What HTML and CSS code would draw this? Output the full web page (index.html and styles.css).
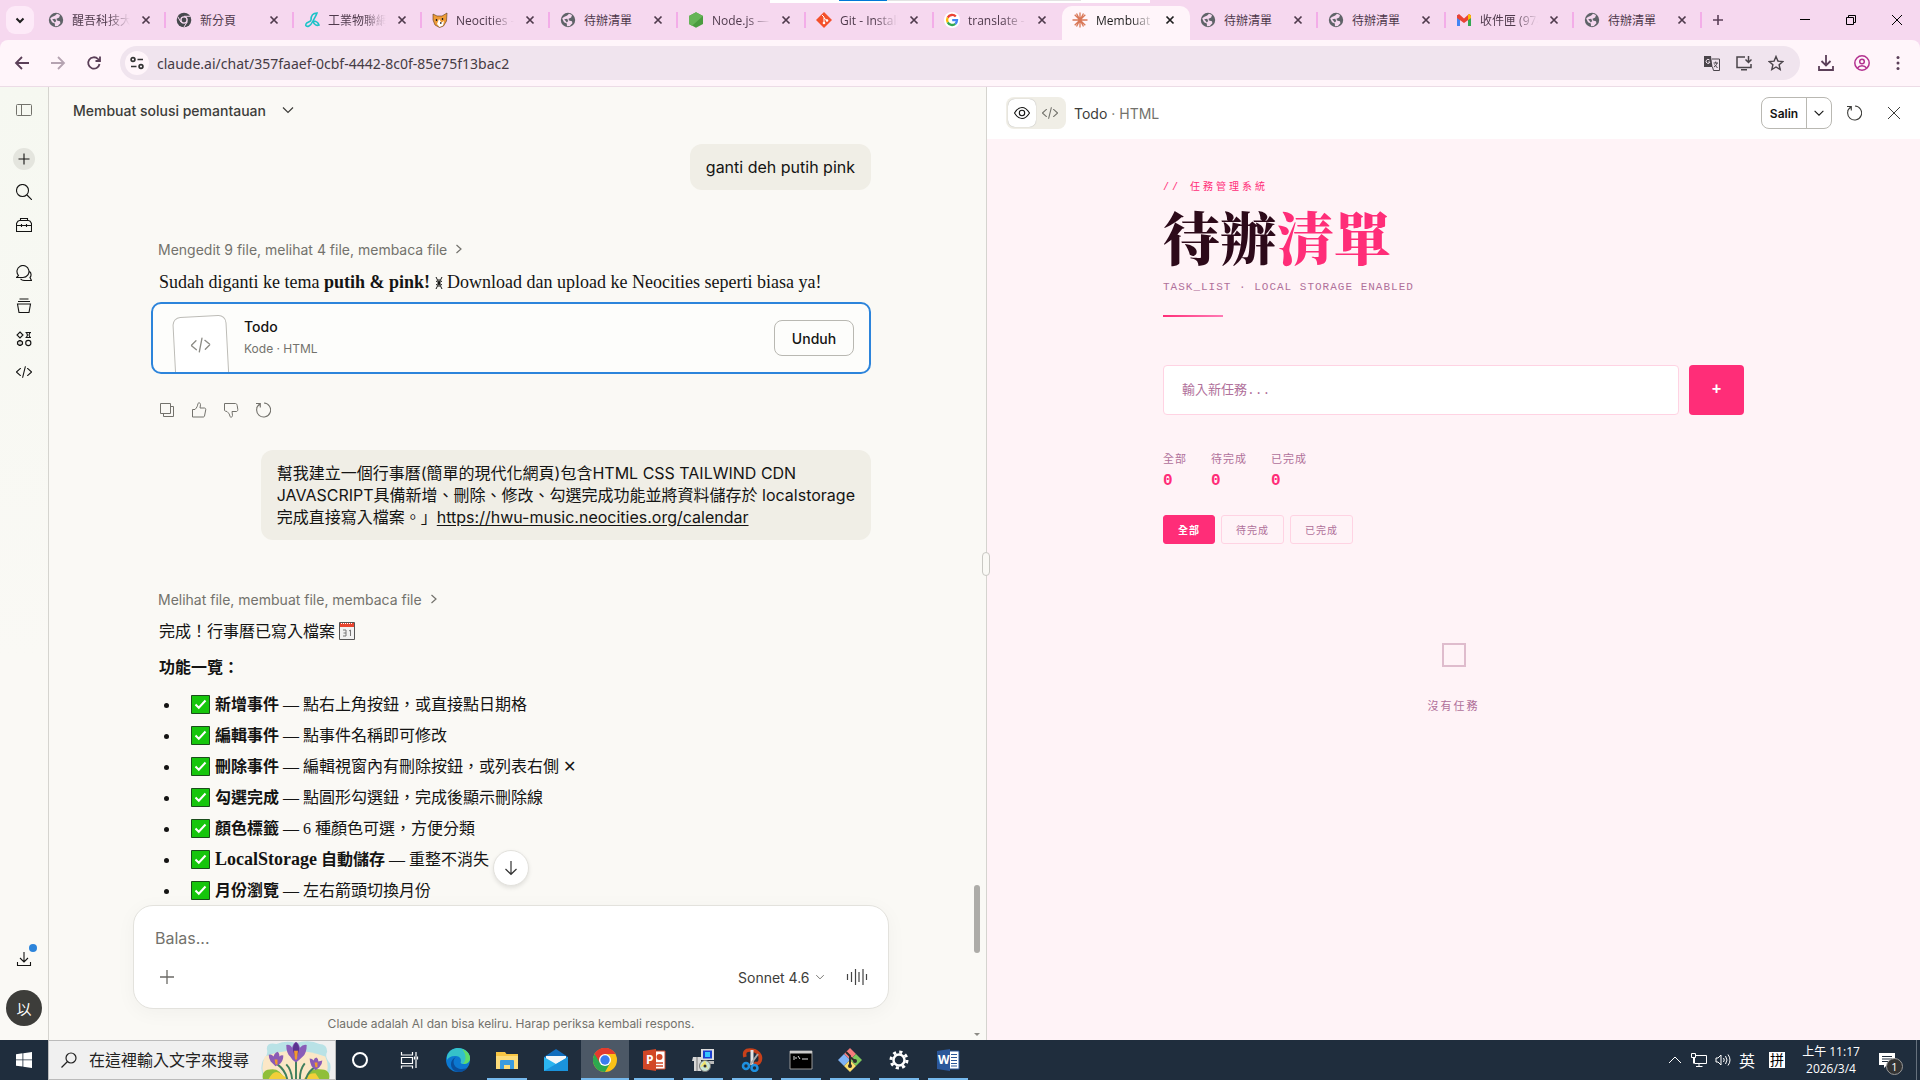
FILE: index.html
```html
<!DOCTYPE html>
<html lang="zh-Hant">
<head>
  <meta charset="UTF-8">
  <meta name="viewport" content="width=device-width, initial-scale=1.0">
  <title>Membuat solusi pemantauan</title>
  <link rel="stylesheet" href="styles.css">
</head>
<body>

  <!-- shared icons -->
  <svg class="sprite" aria-hidden="true">
    <symbol id="i-globe" viewBox="0 0 16 16"><circle cx="8" cy="8" r="7.2" fill="#5f6368"/><path d="M2.2 6.5C4 4 6 4.600 7.500 3.200L9 1.700 12 3l-.8 2.600L8.500 6.800 9 8.600l3 .6.4 2L9.800 14 7 14.300 6.800 11.600 4 10.200z" fill="#f6d8ef"/><path d="M4.200 7.200l3-.4 1 2.200-1.400 1.400z" fill="#5f6368"/></symbol>
    <symbol id="i-x" viewBox="0 0 16 16"><path d="M4.500 4.500l7 7m0-7l-7 7" fill="none" stroke="currentColor" stroke-width="1.700"/></symbol>
    <symbol id="i-code" viewBox="1 1 18 18"><path d="M6 6l-4.500 4L6 14M14 6l4.500 4L14 14M11.500 4l-3 12" fill="none" stroke="currentColor" stroke-width="1.200" stroke-linecap="round" stroke-linejoin="round"/></symbol>
    <symbol id="i-down" viewBox="0 0 16 16"><path d="M3 5.500l5 5 5-5" fill="none" stroke="currentColor" stroke-width="1.200"/></symbol>
    <symbol id="i-right" viewBox="0 0 16 16"><path d="M5.500 4l4.500 4-4.500 4" fill="none" stroke="currentColor" stroke-width="1.200"/></symbol>
    <symbol id="i-plus" viewBox="0 0 16 16"><path d="M8 1v14M1 8h14" fill="none" stroke="currentColor" stroke-width="1.300"/></symbol>
    <symbol id="i-reload" viewBox="0 0 16 16"><path d="M1 1.500h4.300v4M5 2A7 7 0 1 0 9 1M4.800 2.200A7 7 0 0 0 1.600 6" fill="none" stroke="currentColor" stroke-width="1.100"/></symbol>
    <symbol id="i-check" viewBox="0 0 19 19"><path d="M.5.5h18v18H.5z" fill="#16c60c" stroke="#1b4d1b"/><path d="M4.500 9.500l3.300 3.300L14.500 5.500" fill="none" stroke="#fff" stroke-width="2"/></symbol>
  </svg>

  <header class="browser">
    <div class="tabstrip">
      <span class="load-bar"><i></i></span>
      <button class="tab-search" aria-label="Search tabs"><svg viewBox="0 0 16 16"><path d="M4.500 6.500L8 10l3.500-3.500" fill="none" stroke="#1f1f1f" stroke-width="2"/></svg></button>
      <div class="tab"><svg><use href="#i-globe"/></svg><span class="fade">醒吾科技大學</span><button aria-label="Close"><svg><use href="#i-x"/></svg></button></div>
      <div class="tab"><svg viewBox="0 0 16 16"><circle cx="8" cy="8" r="7.300" fill="#46494d"/><circle cx="8" cy="8" r="3.800" fill="#f6d8ef"/><circle cx="8" cy="8" r="2.400" fill="#46494d"/><path d="M8 4.300h6.500M4.800 10L1.700 4.500M11.200 10L8 15" stroke="#f6d8ef" stroke-width="1"/></svg><span>新分頁</span><button aria-label="Close"><svg><use href="#i-x"/></svg></button></div>
      <div class="tab"><svg viewBox="0 0 16 16" fill="none" stroke="#1cc3c8" stroke-width="1.600"><path d="M13 1C8 1 7 5 7 8c0 2-4 2-5 4s1 3 3 2 3-3 4-5 3-5 4-8zM9 9c2 0 5 1 6 4-2 1-5 0-6-4"/></svg><span class="fade">工業物聯網概</span><button aria-label="Close"><svg><use href="#i-x"/></svg></button></div>
      <div class="tab"><svg viewBox="0 0 16 16"><path d="M1 2l4 2h5l5-3-.5 8-3 5-4 1.500L3 13 1 8z" fill="#ee9b37" stroke="#5a3a1a" stroke-width=".6"/><path d="M7 7l2.500 3.500L12 9l-1 4.500-3.500 1.500L5 12z" fill="#fff"/><path d="M4.500 7v2M10.500 6v2M8 11h1.500" stroke="#222" stroke-width="1.300"/></svg><span class="fade">Neocities - C</span><button aria-label="Close"><svg><use href="#i-x"/></svg></button></div>
      <div class="tab"><svg><use href="#i-globe"/></svg><span>待辦清單</span><button aria-label="Close"><svg><use href="#i-x"/></svg></button></div>
      <div class="tab"><svg viewBox="0 0 16 16"><path d="M8 .3l7 3.800v7.800L8 15.700l-7-3.800V4.100z" fill="#4a9c3f"/><path d="M8 .3l7 3.800L4 13.700l-3-1.800V4.100z" fill="#66b457"/></svg><span class="fade">Node.js — D</span><button aria-label="Close"><svg><use href="#i-x"/></svg></button></div>
      <div class="tab"><svg viewBox="0 0 16 16"><path d="M8 0l8 8-8 8-8-8z" fill="#f4502a"/><path d="M6 3l2 2v6M8 6l3 2.500" stroke="#fff" fill="none"/><circle cx="8" cy="11" r="1.300" fill="#fff"/><circle cx="11" cy="8.500" r="1.300" fill="#fff"/></svg><span class="fade">Git - Install</span><button aria-label="Close"><svg><use href="#i-x"/></svg></button></div>
      <div class="tab"><svg viewBox="0 0 16 16" fill="none" stroke-width="2.300"><circle cx="8" cy="8" r="8" fill="#fff"/><path d="M11.800 4.600A5 5 0 0 0 3.700 5.600" stroke="#ea4335"/><path d="M3.700 5.600a5 5 0 0 0 0 4.800" stroke="#fbbc05"/><path d="M3.700 10.400a5 5 0 0 0 7.600 1.400" stroke="#34a853"/><path d="M11.300 11.800A5 5 0 0 0 13 8.200H8.200" stroke="#4285f4"/></svg><span class="fade">translate - G</span><button aria-label="Close"><svg><use href="#i-x"/></svg></button></div>
      <div class="tab active"><svg viewBox="0 0 16 16" stroke="#d97757" stroke-width="1.300"><path d="M8 .5v15M.5 8h15M2.700 2.700l10.600 10.600M13.300 2.700L2.700 13.300M4.500 1.500l7 13M11.500 1.500l-7 13"/></svg><span class="fade">Membuat so</span><button aria-label="Close"><svg><use href="#i-x"/></svg></button></div>
      <div class="tab"><svg><use href="#i-globe"/></svg><span>待辦清單</span><button aria-label="Close"><svg><use href="#i-x"/></svg></button></div>
      <div class="tab"><svg><use href="#i-globe"/></svg><span>待辦清單</span><button aria-label="Close"><svg><use href="#i-x"/></svg></button></div>
      <div class="tab"><svg viewBox="0 0 16 16"><path d="M1 3h3v11H1z" fill="#4285f4"/><path d="M12 3h3v11h-3z" fill="#34a853"/><path d="M1 3.500L3 2l5 4.500L13 2l2 1.500V6l-7 5-7-5z" fill="#ea4335"/><path d="M12 3l1.500-1L15 3.500V6l-3 2z" fill="#fbbc05"/></svg><span class="fade">收件匣 (974)</span><button aria-label="Close"><svg><use href="#i-x"/></svg></button></div>
      <div class="tab"><svg><use href="#i-globe"/></svg><span>待辦清單</span><button aria-label="Close"><svg><use href="#i-x"/></svg></button></div>
      <button class="new-tab" aria-label="New tab"><svg viewBox="0 0 16 16"><path d="M8 3v10M3 8h10" stroke="#5b3f58" stroke-width="1.600"/></svg></button>
      <div class="window-buttons">
        <button aria-label="Minimize"><svg viewBox="0 0 12 12"><path d="M1 5.500h10" stroke="#000"/></svg></button>
        <button aria-label="Restore"><svg viewBox="0 0 12 12" fill="none" stroke="#000"><path d="M1.500 3.500h7v7h-7zM3.500 3.500v-2h7v7h-2"/></svg></button>
        <button aria-label="Close window"><svg viewBox="0 0 12 12"><path d="M1 1l10 10M11 1L1 11" stroke="#000"/></svg></button>
      </div>
    </div>

    <div class="toolbar">
      <button aria-label="Back"><svg viewBox="0 0 16 16" fill="none" stroke="#5b3f58" stroke-width="1.800"><path d="M15 8H2M8 2L2 8l6 6"/></svg></button>
      <button aria-label="Forward"><svg viewBox="0 0 16 16" fill="none" stroke="#b5a3b1" stroke-width="1.800"><path d="M1 8h13M8 2l6 6-6 6"/></svg></button>
      <button aria-label="Reload"><svg viewBox="0 0 16 16" fill="none" stroke="#5b3f58" stroke-width="1.800"><path d="M13.500 9A5.700 5.700 0 1 1 12 4l1.500 1.500M14 1.500v4.500H9.500"/></svg></button>
      <div class="address">
        <span class="site-info"><svg viewBox="0 0 16 16" fill="none" stroke="#333" stroke-width="1.700"><circle cx="4" cy="4.500" r="1.900"/><path d="M8.500 4.500H14M2 11.500h5.500"/><circle cx="12" cy="11.500" r="1.900"/></svg></span>
        <input type="text" aria-label="Address" value="claude.ai/chat/357faaef-0cbf-4442-8c0f-85e75f13bac2">
        <button aria-label="Translate"><svg viewBox="0 0 16 16"><path d="M0 1h7l1.500 11H0z" fill="#4a444a"/><path d="M8 4h7.500v11.500h-6L8.500 12M9.500 8H14M11.700 6.500V8M13 8c-.5 2-1.500 3-3 4M10.500 9.500l3 3.500" fill="none" stroke="#4a444a"/><path d="M5.500 5A2 2 0 1 0 6 7H4.200" fill="none" stroke="#f0e4ee"/></svg></button>
        <button aria-label="Install"><svg viewBox="0 0 16 16" fill="none" stroke="#4a444a" stroke-width="1.500"><path d="M9 2H1v10.500h14V9M5 14.700h6M12.500 1v6M9.500 4.500l3 3 3-3"/></svg></button>
        <button aria-label="Bookmark"><svg viewBox="0 0 16 16" fill="none" stroke="#4a444a" stroke-width="1.400"><path d="M8 1.500l1.900 4.600 4.900.4-3.700 3.200 1.100 4.800L8 12l-4.200 2.500 1.100-4.800L1.200 6.500l4.900-.4z"/></svg></button>
      </div>
      <button aria-label="Downloads"><svg viewBox="0 0 16 16" fill="none" stroke="#5b3f58" stroke-width="1.800"><path d="M8 0v10M3.500 6L8 10.500 12.500 6M1 11v4h14v-4"/></svg></button>
      <button aria-label="Profile"><svg viewBox="0 0 16 16" fill="none" stroke="#b3308f" stroke-width="1.500"><circle cx="8" cy="8" r="7.200"/><circle cx="8" cy="6.500" r="2.300"/><path d="M3.500 13c2-3 7-3 9 0"/></svg></button>
      <button aria-label="Menu"><svg viewBox="0 0 16 16" fill="#5b3f58"><circle cx="8" cy="2.500" r="1.500"/><circle cx="8" cy="8" r="1.500"/><circle cx="8" cy="13.500" r="1.500"/></svg></button>
    </div>
  </header>

  <main class="app">
    <nav class="rail">
      <button class="rail-toggle" aria-label="Sidebar"><svg viewBox="0 0 16 16"><rect x=".5" y="2.500" width="15" height="11" rx="1"/><path d="M5.500 2.500v11"/></svg></button>
      <button class="rail-new" aria-label="New chat"><svg viewBox="0 0 16 16"><path d="M8 2.500v11M2.500 8h11"/></svg></button>
      <button aria-label="Search"><svg viewBox="0 0 16 16"><circle cx="6.500" cy="6.500" r="6"/><path d="M11 11l5 5"/></svg></button>
      <button aria-label="Customize"><svg viewBox="0 0 16 16"><path d="M.5 6.500c1-2.500 2-3 3-3h9c1 0 2 .5 3 3v8H.5zM4.500 3.500v-2h7v2M.5 8.500h15M5.500 7v3M10.500 7v3"/></svg></button>
      <button class="rail-gap" aria-label="Chats"><svg viewBox="0 0 16 16"><path d="M2.500 10.500A6 6 0 1 1 7 12.500H.5zM13.500 6.500c2.500 2 1.500 5 .5 6l1.500 3H9c-2 0-3.500-.7-4.500-1.700"/></svg></button>
      <button aria-label="Projects"><svg viewBox="0 0 16 16"><path d="M3.500 1h9M2 3.500h12M1.500 6h13l-1.500 8.500H3z"/></svg></button>
      <button aria-label="Artifacts"><svg viewBox="0 0 16 16"><path d="M4 1l3 3-3 3-3-3zM9.500 1.500h5.500M9.500 6.500h5.500M10.500 1.500l1 2.500-1 2.500M14 1.500L13 4l1 2.500"/><circle cx="12.300" cy="12" r="2.600"/><path d="M3 9.500h2v1.300h1.500v2.400H5v1.300H3v-1.300H1.500v-2.400H3z"/></svg></button>
      <button aria-label="Code"><svg><use href="#i-code"/></svg></button>
      <button class="rail-download" aria-label="Get apps"><svg viewBox="0 0 16 16"><path d="M8 1v9.500M4 7l4 4 4-4M1.500 11v3.500h13V11"/></svg><i></i></button>
      <button class="avatar">以</button>
    </nav>

    <section class="chat">
      <button class="chat-title">Membuat solusi pemantauan <svg><use href="#i-down"/></svg></button>

      <div class="thread">
        <p class="bubble">ganti deh putih pink</p>

        <button class="steps">Mengedit 9 file, melihat 4 file, membaca file <svg><use href="#i-right"/></svg></button>
        <p class="reply latin">Sudah diganti ke tema <b>putih &amp; pink!</b> <svg class="burst" viewBox="0 0 8 14"><path d="M1 1l6 12M7 1L1 13M1 5l6 4M7 5L1 9M4 3v8" fill="none" stroke="#141413"/></svg> Download dan upload ke Neocities seperti biasa ya!</p>
        <div class="file-card">
          <span class="sheet"><svg><use href="#i-code"/></svg></span>
          <div class="file-name"><strong>Todo</strong><small>Kode · HTML</small></div>
          <button class="btn">Unduh</button>
        </div>
        <div class="actions">
          <button aria-label="Copy"><svg viewBox="0 0 16 16"><path d="M1.500 1.500h10v10h-10zM11.500 4.500h3v10h-10v-3"/></svg></button>
          <button aria-label="Good"><svg viewBox="0 0 16 16"><path d="M1.500 7.500h2.500c2-2 2.500-3.500 3-6 .3-1 2.500-1 2.500 1L9 6h4.500c1 0 1.500 1 1.200 2L13.500 14c-.2.500-.5 1-1 1h-11z"/></svg></button>
          <button aria-label="Bad"><svg viewBox="0 0 16 16"><path d="M1.500 1.500h11c1 0 1.500 1 1.700 2l.6 4c0 1-.5 2-1.300 2H9l.5 4c0 2-2.200 2-2.500 1-.5-2.500-1-3-3-5-1 0-2-.5-2.500-1z"/></svg></button>
          <button aria-label="Retry"><svg><use href="#i-reload"/></svg></button>
        </div>

        <p class="bubble">幫我建立一個行事曆(簡單的現代化網頁)包含HTML CSS TAILWIND CDN<br>JAVASCRIPT具備新增、刪除、修改、勾選完成功能並將資料儲存於 localstorage<br>完成直接寫入檔案。」<a href="#">https://hwu-music.neocities.org/calendar</a></p>

        <button class="steps">Melihat file, membuat file, membaca file <svg><use href="#i-right"/></svg></button>
        <p class="reply">完成！行事曆已寫入檔案 <svg class="emoji" viewBox="0 0 16 18"><path d="M.5.5h15v17H.5z" fill="#f2f2f2" stroke="#555"/><path d="M1 1h14v4H1z" fill="#e8442e"/><path d="M2 1.500h12" stroke="#fff" stroke-dasharray="1 1"/><path d="M4 8h3v6H4M4.500 11H7M10 9l1.500-1v6" fill="none" stroke="#777"/></svg></p>
        <p class="reply heading"><b>功能一覽：</b></p>
        <ul class="features">
          <li><svg><use href="#i-check"/></svg><b>新增事件</b> — 點右上角按鈕，或直接點日期格</li>
          <li><svg><use href="#i-check"/></svg><b>編輯事件</b> — 點事件名稱即可修改</li>
          <li><svg><use href="#i-check"/></svg><b>刪除事件</b> — 編輯視窗內有刪除按鈕，或列表右側 ✕</li>
          <li><svg><use href="#i-check"/></svg><b>勾選完成</b> — 點圓形勾選鈕，完成後顯示刪除線</li>
          <li><svg><use href="#i-check"/></svg><b>顏色標籤</b> — 6 種顏色可選，方便分類</li>
          <li><svg><use href="#i-check"/></svg><b><span class="latin">LocalStorage</span> 自動儲存</b> — 重整不消失</li>
          <li><svg><use href="#i-check"/></svg><b>月份瀏覽</b> — 左右箭頭切換月份</li>
        </ul>
      </div>

      <div class="dock">
        <button class="to-bottom" aria-label="Scroll to bottom"><svg viewBox="0 0 16 16" fill="none" stroke="#333" stroke-width="1.200"><path d="M8 1v13M2.500 9L8 14.300 13.500 9"/></svg></button>
        <form class="composer">
          <textarea rows="1" aria-label="Balas" placeholder="Balas..."></textarea>
          <div class="composer-row">
            <button type="button" aria-label="Attach"><svg><use href="#i-plus"/></svg></button>
            <label class="model"><select aria-label="Model"><option>Sonnet 4.6</option></select><svg><use href="#i-down"/></svg></label>
            <button type="button" class="voice" aria-label="Voice"><svg viewBox="0 0 22 16" stroke="#444" stroke-width="1.200"><path d="M1.500 5v6M5.500 3v10M9.500 0v16M13 3v10M17 0v16M20.500 5v6"/></svg></button>
          </div>
        </form>
        <p class="note">Claude adalah AI dan bisa keliru. Harap periksa kembali respons.</p>
      </div>
      <span class="scroll-thumb"></span>
      <span class="scroll-arrow"></span>
    </section>

    <section class="preview">
      <span class="grip"></span>
      <header class="preview-bar">
        <div class="view-switch">
          <button class="on" aria-label="Preview"><svg viewBox="0 0 16 16" fill="none" stroke="#141413" stroke-width="1.100"><path d="M.5 8C3 4 5.500 2.500 8 2.500S13 4 15.500 8C13 12 10.500 13.500 8 13.500S3 12 .5 8z"/><circle cx="8" cy="8" r="2.700"/></svg></button>
          <button aria-label="Code"><svg><use href="#i-code"/></svg></button>
        </div>
        <h2>Todo <span>· HTML</span></h2>
        <div class="copy"><button>Salin</button><button aria-label="More"><svg><use href="#i-down"/></svg></button></div>
        <button class="icon-btn" aria-label="Refresh"><svg><use href="#i-reload"/></svg></button>
        <button class="icon-btn" aria-label="Close panel"><svg viewBox="0 0 16 16"><path d="M2 2l12 12M14 2L2 14" stroke="currentColor"/></svg></button>
      </header>

      <div class="todo">
        <div class="todo-inner">
          <p class="tag">// 任務管理系統</p>
          <h1>待辦<em>清單</em></h1>
          <p class="sub">TASK_LIST · LOCAL STORAGE ENABLED</p>
          <div class="rule"></div>
          <div class="add">
            <input type="text" aria-label="輸入新任務" placeholder="輸入新任務...">
            <button aria-label="新增">+</button>
          </div>
          <div class="stats">
            <div>全部<b>0</b></div>
            <div>待完成<b>0</b></div>
            <div>已完成<b>0</b></div>
          </div>
          <div class="filters">
            <button class="on">全部</button>
            <button>待完成</button>
            <button>已完成</button>
          </div>
          <div class="empty"><span class="box"></span>沒有任務</div>
        </div>
      </div>
    </section>
  </main>

  <footer class="taskbar">
    <button class="start" aria-label="Start"><svg viewBox="0 0 16 16" fill="#fff"><path d="M0 2.200l6.500-.9v6.200H0zM7.300 1.200L16 0v7.500H7.300zM0 8.300h6.500v6.200L0 13.700zM7.300 8.300H16V16l-8.700-1.300z"/></svg></button>
    <label class="search">
      <svg class="lens" viewBox="0 0 16 16" fill="none" stroke="#222" stroke-width="1.200"><circle cx="10" cy="6" r="5"/><path d="M6.500 9.500L.5 15.500"/></svg>
      <input type="text" aria-label="搜尋" placeholder="在這裡輸入文字來搜尋">
      <svg class="flowers" viewBox="0 0 72 39">
        <path d="M6 8Q6 1 16 3q10-4 20-1 14-4 24 1 8 0 8 8-3 5 3 12 2 8-4 16H4Q-2 30 2 20q6-6 4-12z" fill="#b9e2e6"/>
        <path d="M4 16q30-12 62 0 5 10 0 23H4Q-1 28 4 16z" fill="#fbe7c6"/>
        <path d="M2 39q-2-10 10-10 8 0 12 10zM46 39q4-12 14-10 12 0 10 10z" fill="#8fbf3a"/>
        <path d="M8 39q6-12 14-4l6 4zM44 39q4-6 12-6l4 6z" fill="#f2cf3a"/>
        <g fill="none" stroke="#3f7f5d" stroke-width="2"><path d="M36 18v21M17 24q8 6 10 15M57 26q-8 4-11 13M32 39q-1-10-6-15M40 39q0-10 5-16"/></g>
        <path d="M26 4q4-1 6 3 1-5 4-6 3 1 4 6 3-4 7-3 0 8-4 12-4 4-7 6-4-2-6-6-4-4-4-12z" fill="#8a5cb8"/><path d="M36 1q4 4 3 9l-3 9-3-9q-1-5 3-9z" fill="#5b3390"/>
        <path d="M8 14q3-1 5 2 1-4 4-5 2 1 2 5 2-2 4-1 0 5-3 8l-5 3-5-5q-2-3-2-7z" fill="#8b5bb5"/><path d="M50 18q3 0 4 2 1-3 3-3 2 1 2 4l4-1q0 4-3 7l-4 3-4-4q-2-4-2-8z" fill="#8b5bb5"/>
        <path d="M34 10h4l-1 9h-2zM14 19h3v5h-2zM55 22h3v5h-2z" fill="#f39a2d"/>
      </svg>
    </label>
    <button class="task" aria-label="Cortana"><svg viewBox="0 0 24 24"><circle cx="12" cy="12" r="7" fill="none" stroke="#fff" stroke-width="2"/></svg></button>
    <button class="task" aria-label="Task view"><svg viewBox="0 0 24 24" fill="none" stroke="#fff" stroke-width="1.200"><path d="M4.500 4v3h11V4M4.500 9.500h11v6h-11zM4.500 20.500V18h11v2.500M19 4v4M19 12v8M17.500 9h3v2h-3z"/></svg></button>
    <button class="task" aria-label="Edge"><svg viewBox="0 0 24 24"><circle cx="12" cy="12" r="12" fill="#0c78d1"/><path d="M1 8C3 2 8 0 12 0c8 0 12 6 12 10 0 5-4 6-7 6-2 0-3-1-2-3 0-4-3-5-6-5-4 0-7 2-8 4z" fill="#35c1c9"/><path d="M16 1c5 2 8 5 8 9 0 5-4 6-7 6 3-3 4-9-1-15z" fill="#5fdc68"/><path d="M10 9c-5 4-2 12 6 12 3 0 5-1 6-2-3 5-9 6-13 4-6-3-5-12 1-14z" fill="#0a4f9c"/></svg></button>
    <button class="task open" aria-label="Explorer"><svg viewBox="0 0 24 24"><path d="M1 4h9l1.500 2H23v15H1z" fill="#f8c544"/><path d="M1 8h22v13H1z" fill="#fddc7a"/><path d="M5 21v-8q0-1 1-1h12q1 0 1 1v8h-4v-4H9v4z" fill="#3a9be0"/></svg></button>
    <button class="task" aria-label="Mail"><svg viewBox="0 0 24 24"><path d="M0 9l12-8 12 8v14H0z" fill="#0f6cbd"/><path d="M2 8h20v8H2z" fill="#f4f6f8"/><path d="M0 9l12 7 12-7v14H0z" fill="#2bb5f0"/><path d="M0 23l24-14v14z" fill="#1a93dc"/></svg></button>
    <button class="task open current" aria-label="Chrome"><svg viewBox="0 0 24 24"><circle cx="12" cy="12" r="12" fill="#fbc116"/><path d="M1.600 6A12 12 0 0 1 22.400 6H12z" fill="#e33b2e"/><path d="M1.600 6A12 12 0 0 0 12 24l5.200-9L12 12z" fill="#2da94f"/><path d="M1.600 6L7 15l5-9h10.400A12 12 0 0 0 1.600 6z" fill="#e33b2e"/><circle cx="12" cy="12" r="6" fill="#fff"/><circle cx="12" cy="12" r="4.700" fill="#3a7cf0"/></svg></button>
    <button class="task open" aria-label="PowerPoint"><svg viewBox="0 0 24 24"><path d="M12 3h11v18H12z" fill="#fff" stroke="#d24726"/><circle cx="17.500" cy="9" r="3" fill="#d24726"/><path d="M14 15h7M14 18h7" stroke="#d24726" stroke-width="1.500"/><path d="M1 3l13-2v22L1 21z" fill="#d24726"/><text x="4" y="16" class="glyph">P</text></svg></button>
    <button class="task open" aria-label="Installer"><svg viewBox="0 0 24 24"><path d="M10 1h13v11H10z" fill="#ddd"/><path d="M12 2.500h9v8h-9z" fill="#1b3fd0"/><path d="M14 4h5v5h-5z" fill="#35c5ff"/><path d="M12 13h11v3H12z" fill="#bbb"/><path d="M2 9h8v14H3V13H1z" fill="#d8d8d8"/><path d="M6 9v14" stroke="#777"/><circle cx="14" cy="18" r="5.500" fill="#c9e5d5" stroke="#777"/><path d="M14 12.500l3 9-3-3.500-5 1z" fill="#f1e36b"/><circle cx="14" cy="18" r="1.500" fill="#333"/></svg></button>
    <button class="task open" aria-label="Snip"><svg viewBox="0 0 24 24" fill="none"><path d="M5 9Q3 2 10 2c8 0 12 6 10 11-1 3-4 3-6 2" stroke="#c8401a" stroke-width="3.500"/><path d="M12 2v15" stroke="#e4e4e4" stroke-width="3"/><path d="M18 6l-8 11" stroke="#aaa" stroke-width="2"/><circle cx="6" cy="18" r="3" stroke="#1e90e0" stroke-width="2.500"/><circle cx="14.500" cy="20" r="3" stroke="#1e90e0" stroke-width="2.500"/></svg></button>
    <button class="task open" aria-label="Terminal"><svg viewBox="0 0 24 24"><path d="M1 3h22v18H1z" fill="#000" stroke="#999"/><path d="M1 3h22v2.500H1z" fill="#ccc"/><path d="M4 9h2M4 11h2M7 9v2M9 8l2 3M13 11h6" stroke="#ddd"/></svg></button>
    <button class="task open" aria-label="Git"><svg viewBox="0 0 24 24"><path d="M12 0l6 6-6 6-6-6z" fill="#f47c7c"/><path d="M6 6l6 6-6 6-6-6z" fill="#7fb2f5"/><path d="M18 6l6 6-6 6-6-6z" fill="#7cc85c"/><path d="M12 12l6 6-6 6-6-6z" fill="#fbdc6c"/><path d="M8 4l4 4v11M12 9l5 4" fill="none" stroke="#2c2c2c" stroke-width="2"/><circle cx="12" cy="18" r="2" fill="#2c2c2c"/><circle cx="17" cy="13" r="2" fill="#2c2c2c"/></svg></button>
    <button class="task open" aria-label="Settings"><svg viewBox="0 0 24 24" fill="none" stroke="#fff"><circle cx="12" cy="12" r="5.500" stroke-width="2.500"/><circle cx="12" cy="12" r="8" stroke-width="3" stroke-dasharray="3.140 3.140"/></svg></button>
    <button class="task open" aria-label="Word"><svg viewBox="0 0 24 24"><path d="M12 3h11v18H12z" fill="#fff" stroke="#2b579a"/><path d="M15 6.500h6M15 9.500h6M15 12.500h6M15 15.500h6M15 18h6" stroke="#2b579a"/><path d="M1 3l13-2v22L1 21z" fill="#2b579a"/><text x="2" y="16" class="glyph">W</text></svg></button>

    <div class="tray">
      <svg viewBox="0 0 16 16"><path d="M2 11l6-6 6 6"/></svg>
      <svg viewBox="0 0 16 16"><path d="M4 3.500h11.500v8H3.500V6M8 11.500v3M5 14.500h6.500M.5 1.500h4v4h-4zM2.500 5.500v6"/></svg>
      <svg viewBox="0 0 16 16"><path d="M1 6v4h2l3 3V3L3 6zM8.500 6q1.500 2 0 4M10.500 4q3 4 0 8M13 2.500q4 5.500 0 11"/></svg>
      <span class="lang">英</span>
      <span class="ime">拼</span>
      <time>上午 11:17<br>2026/3/4</time>
      <span class="notice"><svg viewBox="0 0 16 16"><path d="M0 0h16v12H8l-3 3v-3H0z" fill="#fff" stroke="none"/><path d="M3 3.500h10M3 6h10M3 8.500h6" stroke="#1f2d3d"/></svg><i>1</i></span>
    </div>
  </footer>

</body>
</html>
```

FILE: styles.css
```css
* {
  box-sizing: border-box;
}

body {
  margin: 0;
  height: 100vh;
  display: flex;
  flex-direction: column;
  overflow: hidden;
  font-family: Inter, "Noto Sans CJK TC", sans-serif;
  font-size: 16px;
  color: #141413;
}

p, h1, h2, ul {
  margin: 0;
  padding: 0;
  font-weight: normal;
}

button, input, textarea, select {
  font: inherit;
  color: inherit;
  border: 0;
  padding: 0;
  background: none;
  outline: 0;
}

button {
  display: flex;
  align-items: center;
  justify-content: center;
  flex-shrink: 0;
}

svg {
  width: 16px;
  height: 16px;
  flex-shrink: 0;
}

.sprite {
  display: none;
}

/* browser window */
.browser {
  background: #f6d8ef;
  font-family: "Open Sans", "Noto Sans CJK TC", sans-serif;
}

.tabstrip {
  position: relative;
  display: flex;
  align-items: center;
  height: 40px;
  padding-left: 6px;
}

.load-bar {
  position: absolute;
  top: 0;
  left: 770px;
  width: 380px;
  height: 3px;
  padding: 0 69px;
  background: #fff;
}

.load-bar i {
  display: block;
  height: 1px;
  background: linear-gradient(90deg, #0078d7 48px, #e3e3e3 48px);
}

.tab-search {
  width: 28px;
  height: 28px;
  margin-right: 4px;
  border-radius: 9px;
  background: #fdeaf8;
}

.tab {
  position: relative;
  flex: 0 1 128px;
  min-width: 0;
  display: flex;
  align-items: center;
  gap: 8px;
  height: 34px;
  align-self: flex-end;
  padding: 0 12px 6px 10px;
  font-size: 12px;
  color: #4f3a4c;
}

.tab::after {
  content: "";
  position: absolute;
  right: 0;
  top: 6px;
  width: 2px;
  height: 16px;
  background: #f3ade8;
}

.tab span {
  flex: 1;
  min-width: 0;
  overflow: hidden;
  white-space: nowrap;
}

.tab .fade {
  -webkit-mask-image: linear-gradient(90deg, #000 60%, transparent);
  mask-image: linear-gradient(90deg, #000 60%, transparent);
}

.tab.active {
  color: #1f1f1f;
  background: #fff5fa;
  border-radius: 10px 10px 0 0;
}

.tab.active::after,
.tab:has(+ .active)::after {
  display: none;
}

.new-tab {
  width: 28px;
  height: 28px;
  margin-left: 2px;
}

.window-buttons {
  display: flex;
  margin-left: auto;
}

.window-buttons button {
  width: 46px;
  height: 40px;
}

.window-buttons svg {
  width: 12px;
  height: 12px;
}

.toolbar {
  display: flex;
  align-items: center;
  height: 47px;
  padding: 0 4px;
  border-bottom: 1px solid #ecdce6;
  border-radius: 8px 8px 0 0;
  background: #fff5fa;
}

.toolbar > button {
  width: 36px;
  height: 36px;
}

.address {
  flex: 1;
  display: flex;
  align-items: center;
  height: 34px;
  margin: 0 8px;
  padding: 0 8px 0 5px;
  border-radius: 17px;
  background: #f0e4ee;
}

.address input {
  flex: 1;
  margin-left: 8px;
  font-family: "Noto Sans", sans-serif;
  font-size: 14px;
  color: #453b44;
}

.address button {
  width: 32px;
}

.site-info {
  display: flex;
  align-items: center;
  justify-content: center;
  width: 24px;
  height: 24px;
  border-radius: 12px;
  background: #fff5fa;
}

/* app */
.app {
  flex: 1;
  display: flex;
  min-height: 0;
}

.rail {
  display: flex;
  flex-direction: column;
  align-items: center;
  width: 49px;
  padding: 13px 0 14px;
  border-right: 1px solid #d5d4cf;
  background: linear-gradient(#f6f8f1, #faf9f5 60%);
}

.rail button {
  width: 33px;
  height: 33px;
}

.rail svg {
  fill: none;
  stroke: #141413;
  stroke-width: 1.1;
}

.rail .rail-toggle {
  height: 20px;
  margin-bottom: 28px;
}

.rail .rail-toggle svg {
  stroke: #73726c;
  stroke-width: 1;
}

.rail .rail-new {
  width: 22px;
  height: 22px;
  margin-bottom: 5px;
  border-radius: 11px;
  background: #e4e5de;
}

.rail .rail-gap {
  margin-top: 15px;
}

.rail .rail-download {
  position: relative;
  margin-top: auto;
}

.rail-download i {
  position: absolute;
  top: 2px;
  right: 4px;
  width: 8px;
  height: 8px;
  border-radius: 4px;
  background: #2c84db;
}

.rail .avatar {
  width: 36px;
  height: 36px;
  margin-top: 15px;
  border-radius: 18px;
  background: #3d3d3a;
  color: #fff;
  font-size: 15px;
}

.chat {
  position: relative;
  width: 938px;
  flex-shrink: 1;
  display: flex;
  flex-direction: column;
  padding-right: 13px;
  border-right: 1px solid #d5d4cf;
  background: #faf9f5;
}

.chat-title {
  align-self: flex-start;
  gap: 14px;
  height: 46px;
  padding-left: 24px;
  font-size: 14px;
  font-weight: 500;
  color: #3d3d3a;
}

.thread {
  display: flex;
  flex-direction: column;
  align-items: flex-start;
  width: 720px;
  margin: 11px auto 0;
}

.bubble {
  align-self: flex-end;
  padding: 12px 16px;
  border-radius: 12px;
  background: #f0eee6;
  line-height: 22px;
  white-space: nowrap;
}

.bubble a {
  color: inherit;
  text-underline-offset: 2px;
}

.steps {
  gap: 4px;
  height: 20px;
  margin: 49px 0 11px 7px;
  font-size: 14px;
  color: #73726c;
}

.reply {
  margin-left: 8px;
  font-family: "Liberation Serif", "Noto Sans CJK TC", serif;
  font-size: 16px;
  line-height: 24px;
}

.latin {
  font-size: 18px;
}

.burst {
  width: 8px;
  height: 14px;
  vertical-align: -2px;
}

.emoji {
  height: 18px;
  vertical-align: -3px;
}

.file-card {
  display: flex;
  align-items: flex-start;
  width: 100%;
  height: 72px;
  margin-top: 8px;
  padding: 16px 15px 0 21px;
  overflow: hidden;
  border: 2px solid #2c84db;
  border-radius: 10px;
  background: #fdfdfb;
}

.sheet {
  display: flex;
  justify-content: center;
  width: 54px;
  height: 72px;
  margin-top: -4px;
  padding-top: 18px;
  border: 1px solid #bdbcb7;
  border-radius: 8px;
  background: #fff;
  color: #8c8b85;
  transform: rotate(-3deg);
}

.sheet svg {
  width: 20px;
  height: 20px;
}

.file-name {
  flex: 1;
  margin: -4px 0 0 16px;
}

.file-name strong,
.file-name small {
  display: block;
  font-size: 14px;
  font-weight: 500;
  line-height: 22px;
}

.file-name small {
  font-size: 12px;
  font-weight: 400;
  color: #73726c;
}

.btn {
  width: 80px;
  height: 36px;
  border: 1px solid #b9b8b2;
  border-radius: 8px;
  font-size: 14px;
  font-weight: 500;
}

.actions {
  display: flex;
  gap: 16px;
  margin: 28px 0 32px 8px;
  color: #73726c;
}

.actions svg {
  fill: none;
  stroke: #73726c;
}

.heading {
  margin-top: 12px;
}

.features {
  margin: 9px 0 0 7px;
  padding-left: 57px;
  font-family: "Liberation Serif", "Noto Sans CJK TC", serif;
  list-style: none;
}

.features li {
  position: relative;
  height: 31px;
  line-height: 31px;
  white-space: nowrap;
}

.features li::before {
  content: "";
  position: absolute;
  left: -51px;
  top: 14px;
  width: 5px;
  height: 5px;
  border-radius: 3px;
  background: #141413;
}

.features svg {
  width: 19px;
  height: 19px;
  margin: 0 5px 0 -24px;
  vertical-align: -4px;
}

.dock {
  position: absolute;
  left: 0;
  right: 13px;
  bottom: 0;
  display: flex;
  flex-direction: column;
  align-items: center;
  background: linear-gradient(transparent 54px, #faf9f5 80px);
}

.to-bottom {
  width: 36px;
  height: 36px;
  margin-bottom: 19px;
  border: 1px solid #e3e2dd;
  border-radius: 18px;
  background: #fff;
  box-shadow: 0 2px 4px rgba(0, 0, 0, .1);
}

.composer {
  width: 756px;
  height: 104px;
  padding: 20px 20px 0 21px;
  border: 1px solid #e3e2dd;
  border-radius: 20px;
  background: #fff;
  box-shadow: 0 4px 20px rgba(0, 0, 0, .04);
}

.composer textarea {
  display: block;
  width: 100%;
  height: 24px;
  line-height: 24px;
  resize: none;
}

.composer textarea::placeholder {
  color: #73726c;
}

.composer-row {
  display: flex;
  align-items: center;
  margin-top: 15px;
  padding-left: 4px;
  height: 24px;
  color: #6b6a65;
}

.model {
  display: flex;
  align-items: center;
  gap: 4px;
  margin-left: auto;
  font-size: 14px;
}

.model select {
  appearance: none;
  color: #3d3d3a;
}

.model svg {
  width: 12px;
}

.voice {
  margin-left: 20px;
}

.voice svg {
  width: 22px;
}

.note {
  padding: 7px 0 8px;
  font-size: 12px;
  line-height: 16px;
  color: #73726c;
}

.scroll-thumb {
  position: absolute;
  right: 6px;
  bottom: 87px;
  width: 6px;
  height: 68px;
  border-radius: 3px;
  background: #adaca8;
}

.scroll-arrow {
  position: absolute;
  right: 6px;
  bottom: 4px;
  border: 3px solid transparent;
  border-top-color: #8c8b85;
  border-bottom: 0;
}

/* artifact panel */
.preview {
  position: relative;
  flex: 1;
  display: flex;
  flex-direction: column;
}

.grip {
  position: absolute;
  left: -5px;
  top: 465px;
  width: 8px;
  height: 24px;
  border: 1px solid #c9c8c3;
  border-radius: 4px;
  background: #faf9f5;
}

.preview-bar {
  display: flex;
  align-items: center;
  height: 52px;
  padding: 0 10px 0 19px;
  background: #fff;
}

.view-switch {
  display: flex;
  padding: 2px;
  border-radius: 8px;
  background: #f0eee6;
  color: #73726c;
}

.view-switch button {
  width: 28px;
  height: 28px;
  border-radius: 7px;
}

.view-switch .on {
  background: #fff;
  box-shadow: 0 0 1px #999;
}

.preview-bar h2 {
  flex: 1;
  margin-left: 8px;
  font-size: 14px;
  color: #3d3d3a;
}

.preview-bar h2 span {
  color: #73726c;
}

.copy {
  display: flex;
  height: 32px;
  border: 1px solid #b9b8b2;
  border-radius: 8px;
  font-size: 12px;
  font-weight: 600;
}

.copy button {
  width: 44px;
}

.copy button + button {
  width: 25px;
  border-left: 1px solid #b9b8b2;
}

.copy svg {
  width: 14px;
}

.icon-btn {
  width: 32px;
  height: 32px;
  margin-left: 8px;
  color: #3d3d3a;
}

.icon-btn:first-of-type {
  margin-left: 6px;
}

.todo {
  flex: 1;
  background: #fff3f7;
  font-family: "Liberation Mono", "Noto Sans CJK TC", monospace;
  color: #b0709a;
}

.todo-inner {
  max-width: 581px;
  margin: 0 auto;
  padding-top: 40px;
}

.tag {
  font-size: 10px;
  line-height: 18px;
  letter-spacing: 3px;
  color: #ff2d78;
}

.todo h1 {
  margin-top: 3px;
  font-family: "Noto Serif CJK TC", "Noto Sans CJK TC", serif;
  font-size: 57px;
  font-weight: 900;
  line-height: 70px;
  color: #2d0a1a;
}

.todo h1 em {
  font-style: normal;
  color: #ff2d78;
}

.sub {
  margin-top: 9px;
  font-size: 11px;
  line-height: 16px;
  letter-spacing: 1px;
}

.rule {
  width: 60px;
  height: 2px;
  margin-top: 20px;
  background: linear-gradient(90deg, #ff2d78, #ff7ab5);
}

.add {
  display: flex;
  gap: 10px;
  margin-top: 48px;
}

.add input {
  flex: 1;
  height: 50px;
  padding: 0 18px;
  border: 1px solid #ffd3e3;
  border-radius: 4px;
  background: #fff;
  font-size: 13px;
}

.add input::placeholder {
  color: #b0709a;
}

.add button {
  width: 55px;
  border-radius: 4px;
  background: #ff2d78;
  color: #fff;
  font-weight: bold;
}

.stats {
  display: flex;
  gap: 24px;
  margin-top: 36px;
  font-size: 11px;
  line-height: 18px;
  letter-spacing: 1px;
}

.stats b {
  display: block;
  font-size: 16px;
  line-height: 24px;
  color: #ff2d78;
}

.filters {
  display: flex;
  gap: 6px;
  margin-top: 22px;
}

.filters button {
  height: 29px;
  padding: 0 14px;
  border: 1px solid #ffd3e3;
  border-radius: 3px;
  font-size: 10px;
  letter-spacing: 1px;
}

.filters .on {
  border-color: #ff2d78;
  background: #ff2d78;
  color: #fff;
  font-weight: bold;
}

.empty {
  display: flex;
  flex-direction: column;
  align-items: center;
  gap: 31px;
  margin-top: 99px;
  font-size: 11px;
  line-height: 18px;
  letter-spacing: 2px;
}

.box {
  width: 24px;
  height: 24px;
  border: 2px solid #dfbccd;
}

/* taskbar */
.taskbar {
  display: flex;
  height: 40px;
  background: #1f2d3d;
  font-family: "Open Sans", "Noto Sans CJK TC", sans-serif;
  color: #fff;
}

.start {
  width: 48px;
}

.search {
  display: flex;
  align-items: center;
  width: 288px;
  padding-left: 12px;
  border: 1px solid #bbb;
  background: #f0f0f0;
  color: #222;
}

.search input {
  flex: 1;
  min-width: 0;
  margin-left: 12px;
}

.search input::placeholder {
  color: #222;
}

.search .flowers {
  width: 72px;
  height: 38px;
  margin-right: 3px;
}

.task {
  width: 48px;
  height: 40px;
  margin-right: 1px;
}

.task svg {
  width: 24px;
  height: 24px;
}

.open {
  background: linear-gradient(#76b9ed, #76b9ed) center bottom / 40px 2px no-repeat;
}

.current {
  background-color: #4c5866;
  background-size: 48px 2px;
}

.glyph {
  font: bold 12px "Open Sans", sans-serif;
  fill: #fff;
}

.tray {
  display: flex;
  align-items: center;
  gap: 8px;
  margin-left: auto;
  padding-right: 3px;
}

.tray svg {
  fill: none;
  stroke: #fff;
}

.lang {
  font-size: 16px;
}

.ime {
  width: 16px;
  margin: 0 4px 0 6px;
  background: #fff;
  color: #000;
  font-size: 14px;
  line-height: 16px;
  text-align: center;
}

.tray time {
  width: 68px;
  font-size: 12px;
  line-height: 17px;
  text-align: center;
}

.notice {
  position: relative;
  width: 44px;
  height: 40px;
  padding: 12px 0 0 6px;
  border-right: 1px solid #66717d;
}

.notice i {
  position: absolute;
  left: 13px;
  top: 18px;
  width: 17px;
  height: 17px;
  border: 1px solid #999;
  border-radius: 9px;
  background: #333;
  font-size: 11px;
  font-style: normal;
  line-height: 15px;
  text-align: center;
}
```
